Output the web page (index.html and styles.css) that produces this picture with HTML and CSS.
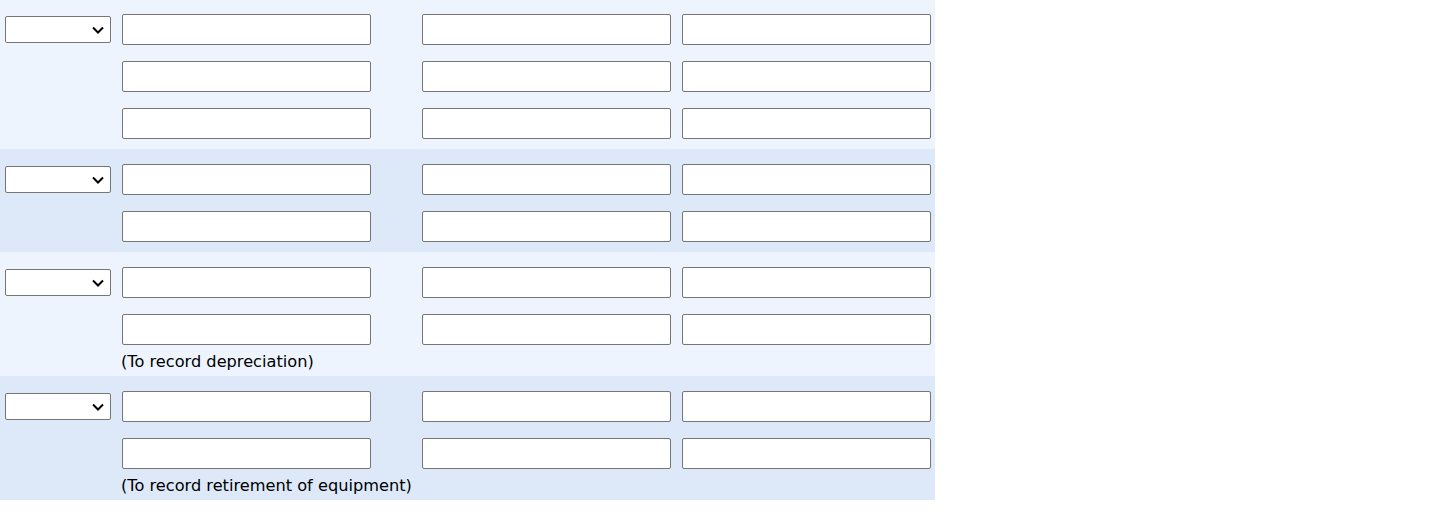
FILE: index.html
```html
<!DOCTYPE html>
<html>
<head>
<meta charset="utf-8">
<link rel="stylesheet" href="styles.css">
</head>
<body>
<div class="journal">
  <div class="section light first">
    <div class="grid">
      <span class="sel"><select class="acct"><option></option></select><svg class="chev" width="12" height="8" viewBox="0 0 12 8"><path d="M1 1.5 L6 6.5 L11 1.5" fill="none" stroke="#000" stroke-width="2"/></svg></span>
      <input class="in c1" type="text"><input class="in c2" type="text"><input class="in c3" type="text">
      <input class="in c1" type="text"><input class="in c2" type="text"><input class="in c3" type="text">
      <input class="in c1" type="text"><input class="in c2" type="text"><input class="in c3" type="text">
    </div>
  </div>
  <div class="section dark">
    <div class="grid">
      <span class="sel"><select class="acct"><option></option></select><svg class="chev" width="12" height="8" viewBox="0 0 12 8"><path d="M1 1.5 L6 6.5 L11 1.5" fill="none" stroke="#000" stroke-width="2"/></svg></span>
      <input class="in c1" type="text"><input class="in c2" type="text"><input class="in c3" type="text">
      <input class="in c1" type="text"><input class="in c2" type="text"><input class="in c3" type="text">
    </div>
  </div>
  <div class="section light labeled">
    <div class="grid">
      <span class="sel"><select class="acct"><option></option></select><svg class="chev" width="12" height="8" viewBox="0 0 12 8"><path d="M1 1.5 L6 6.5 L11 1.5" fill="none" stroke="#000" stroke-width="2"/></svg></span>
      <input class="in c1" type="text"><input class="in c2" type="text"><input class="in c3" type="text">
      <input class="in c1" type="text"><input class="in c2" type="text"><input class="in c3" type="text">
    </div>
    <div class="note">(To record depreciation)</div>
  </div>
  <div class="section dark labeled">
    <div class="grid">
      <span class="sel"><select class="acct"><option></option></select><svg class="chev" width="12" height="8" viewBox="0 0 12 8"><path d="M1 1.5 L6 6.5 L11 1.5" fill="none" stroke="#000" stroke-width="2"/></svg></span>
      <input class="in c1" type="text"><input class="in c2" type="text"><input class="in c3" type="text">
      <input class="in c1" type="text"><input class="in c2" type="text"><input class="in c3" type="text">
    </div>
    <div class="note">(To record retirement of equipment)</div>
  </div>
</div>
</body>
</html>
```
FILE: styles.css
```css
html, body {
  margin: 0;
  padding: 0;
  background: #ffffff;
}
body {
  font-family: "DejaVu Sans", Verdana, sans-serif;
  color: #000;
}
.journal {
  width: 935px;
}
.section {
  padding: 15px 4px 10px 5px;
}
.section.first {
  padding-top: 14px;
}
.section.labeled {
  padding-bottom: 4px;
}
.light { background: #edf4fe; }
.dark { background: #dde9f9; }
.grid {
  display: grid;
  grid-template-columns: 106px 289px 249px 249px;
  column-gap: 11px;
  row-gap: 16px;
  align-items: center;
}
.sel {
  grid-column: 1;
  grid-row: 1;
  position: relative;
  display: block;
  width: 106px;
  height: 27px;
}
.acct {
  display: block;
  -webkit-appearance: none;
  appearance: none;
  width: 106px;
  height: 27px;
  box-sizing: border-box;
  border: 1px solid #767676;
  border-radius: 2px;
  background-color: #fff;
  margin: 0;
}
.chev {
  position: absolute;
  right: 7px;
  top: 10px;
  pointer-events: none;
}
.in {
  box-sizing: border-box;
  height: 31px;
  width: 249px;
  border: 1px solid #767676;
  border-radius: 2px;
  background: #fff;
  margin: 0;
  padding: 0 4px;
}
.c1 { grid-column: 2; }
.c2 { grid-column: 3; }
.c3 { grid-column: 4; }
.note {
  margin: 6px 0 0 116px;
  font-size: 16.2px;
  line-height: 21px;
}
```
